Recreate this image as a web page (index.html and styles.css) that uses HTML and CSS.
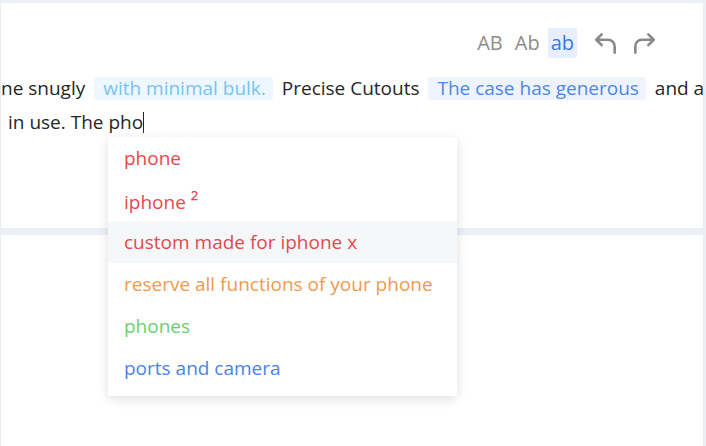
FILE: index.html
```html
<!DOCTYPE html>
<html>
<head>
<meta charset="utf-8">
<link rel="stylesheet" href="styles.css">
</head>
<body>
<div class="page">
  <div class="card top">
    <div class="toolbar">
      <span class="case">AB</span>
      <span class="case">Ab</span>
      <span class="case active">ab</span>
      <svg class="icon undo" viewBox="0 0 24 24" width="26" height="26"><path d="M8 4 L3 9 L8 14 M3 9 H14 A6 6 0 0 1 20 15 V21" fill="none" stroke="#8a8a8a" stroke-width="2.4" stroke-linecap="round" stroke-linejoin="round"/></svg>
      <svg class="icon redo" viewBox="0 0 24 24" width="26" height="26"><path d="M16 4 L21 9 L16 14 M21 9 H10 A6 6 0 0 0 4 15 V21" fill="none" stroke="#8a8a8a" stroke-width="2.4" stroke-linecap="round" stroke-linejoin="round"/></svg>
    </div>
    <div class="text">
      <div class="line">ne snugly <span class="chip light">with minimal bulk.</span> Precise Cutouts <span class="chip blue">The case has generous</span> and a</div>
      <div class="line second">in use. The pho<span class="caret"></span></div>
    </div>
  </div>
  <div class="card bottom"></div>
  <ul class="menu">
    <li class="item red">phone</li>
    <li class="item red">iphone <span class="sup">²</span></li>
    <li class="item red hover">custom made for iphone x</li>
    <li class="item orange">reserve all functions of your phone</li>
    <li class="item green">phones</li>
    <li class="item blue">ports and camera</li>
  </ul>
</div>
</body>
</html>
```
FILE: styles.css
```css
* { box-sizing: border-box; }
html, body { margin: 0; padding: 0; }
body {
  width: 706px;
  height: 446px;
  overflow: hidden;
  background: #eceff3;
  font-family: "Open Sans", "Noto Sans", sans-serif;
}
.page {
  position: relative;
  padding-top: 3px;
  padding-right: 2px;
  display: flex;
  flex-direction: column;
  gap: 7px;
  height: 446px;
}
.card {
  background: #fff;
  border-left: 1px solid #e6ebf1;
  border-right: 1px solid #e6ebf1;
}
.card.top {
  height: 225px;
  overflow: hidden;
}
.card.bottom {
  flex: 1;
}
.toolbar {
  display: flex;
  justify-content: flex-end;
  align-items: center;
  height: 54px;
  padding-top: 26px;
  padding-right: 46px;
}
.case {
  font-size: 20px;
  color: #8c8c8c;
  line-height: 30px;
  padding: 0 3px;
  margin-right: 6px;
  border-radius: 2px;
}
.case:nth-child(2) { margin-right: 5px; }
.case.active {
  background: #e7efff;
  color: #3a78e6;
  margin-right: 16px;
}
.icon { display: block; }
.icon.undo { margin-right: 12px; }
.text {
  padding-top: 14px;
  font-size: 19px;
  color: #262626;
}
.line {
  white-space: nowrap;
  line-height: 34px;
  height: 34px;
}
.line.second {
  padding-left: 7px;
}
.chip {
  display: inline-block;
  line-height: 23px;
  padding: 0 7px 0 9px;
  margin: 0 4px;
  border-radius: 3px;
}
.chip.light { background: #eef7fd; color: #7ac3f0; }
.chip.blue { background: #eef3fd; color: #4c87e8; }
.caret {
  display: inline-block;
  width: 1px;
  height: 21px;
  background: #262626;
  vertical-align: -4px;
}
.menu {
  position: absolute;
  left: 108px;
  top: 137px;
  width: 349px;
  margin: 0;
  padding: 0 0 7px;
  list-style: none;
  background: #fff;
  border-radius: 3px;
  box-shadow: 0 3px 12px rgba(0, 0, 0, 0.13);
}
.item {
  height: 42px;
  line-height: 42px;
  padding-left: 16px;
  font-size: 19px;
}
.sup { font-size: 22px; }
.item.hover { background: #f6f7f9; }
.red { color: #e8474e; }
.orange { color: #f09a4c; }
.green { color: #6ccf6d; }
.item.blue { color: #4a84e6; }
```
